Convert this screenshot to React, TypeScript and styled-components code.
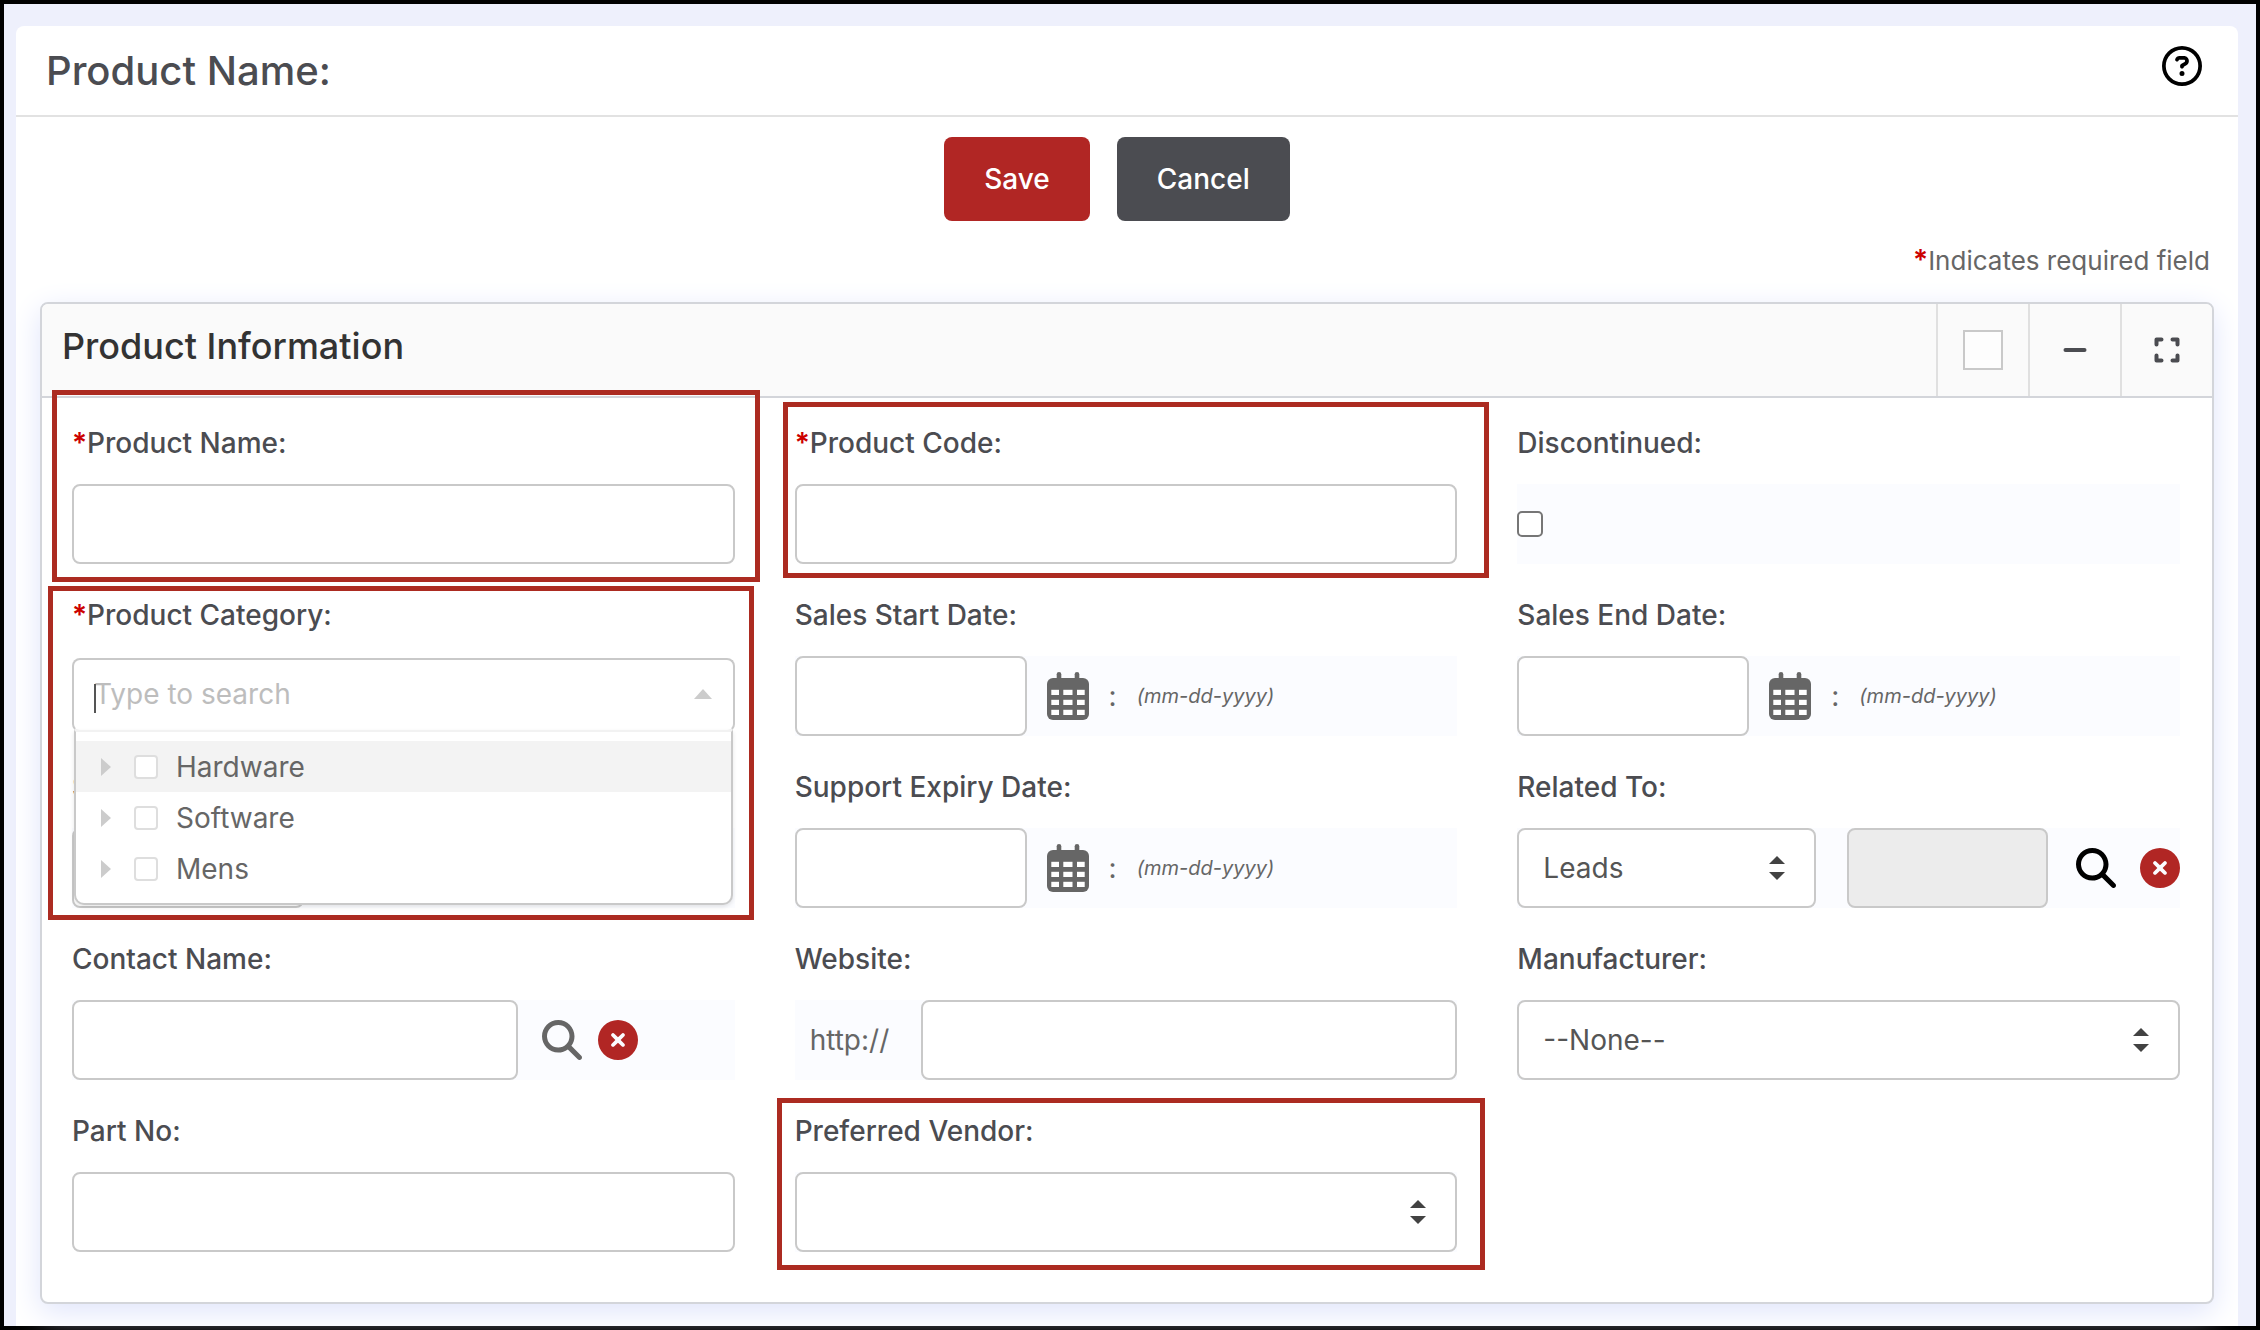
import React, { useId } from "react";
import styled, { createGlobalStyle } from "styled-components";
import {
  FaCircleXmark,
  FaMagnifyingGlass,
  FaRegCircleQuestion,
} from "react-icons/fa6";

const color = {
  page: "#eef0fc",
  label: "#4b4c51",
  text: "#666666",
  line: "#c9c9c9",
  panelLine: "#d3d5da",
  tint: "#fbfcff",
  red: "#b12624",
  star: "#cc0000",
  mark: "#ac2b21",
};

const GlobalStyle = createGlobalStyle`
  *, *::before, *::after { box-sizing: border-box; }
  body {
    margin: 0;
    font-family: Inter, "Liberation Sans", sans-serif;
    font-size: 28px;
    line-height: 40px;
    color: ${color.text};
  }
  button, input, select { font: inherit; color: inherit; margin: 0; }
`;

const Page = styled.main`
  display: flex;
  min-height: 100vh;
  padding: 22px 18px 0 12px;
  border: 4px solid #000;
  background: ${color.page};
`;

const Card = styled.form`
  flex: 1;
  min-width: 0;
  padding-bottom: 22px;
  border-radius: 8px 8px 0 0;
  background: #fff;
`;

const CardHeader = styled.header`
  display: flex;
  align-items: flex-start;
  justify-content: space-between;
  padding: 20px 36px 20px 30px;
  border-bottom: 2px solid #e2e2e2;
`;

const Title = styled.h1`
  margin: 0;
  font-size: 40px;
  line-height: 49px;
  font-weight: 500;
  color: ${color.label};
`;

const IconButton = styled.button<{ $tone?: string }>`
  display: flex;
  flex: none;
  padding: 0;
  border: 0;
  background: none;
  color: ${(p) => p.$tone ?? color.text};
  cursor: pointer;
`;

const Actions = styled.div`
  display: flex;
  justify-content: center;
  gap: 27px;
  padding: 20px 20px 0 0;
`;

const ActionButton = styled.button<{ $tone: string }>`
  height: 84px;
  padding: 0 40px;
  border: 0;
  border-radius: 8px;
  background: ${(p) => p.$tone};
  color: #fff;
  font-weight: 500;
  cursor: pointer;
`;

const RequiredNote = styled.p`
  margin: 19px 28px 21px;
  font-size: 26px;
  text-align: right;
`;

const Star = styled.span`
  font-size: 28px;
  color: ${color.star};
  font-weight: 600;
`;

const Panel = styled.section`
  margin: 0 24px;
  border: 2px solid ${color.panelLine};
  border-radius: 8px;
  background: #fff;
  box-shadow: 0 8px 30px #dfe4fb;
`;

const PanelHeader = styled.header`
  display: flex;
  height: 94px;
  border-bottom: 2px solid ${color.panelLine};
  border-radius: 6px 6px 0 0;
  background: #fafafa;
`;

const PanelTitle = styled.h2`
  flex: 1;
  margin: 0;
  padding: 20px;
  font-size: 36px;
  line-height: 44px;
  font-weight: 500;
  color: #333;
`;

const PanelTool = styled.div`
  display: flex;
  align-items: center;
  justify-content: center;
  width: 92px;
  border-left: 2px solid #e0e0e0;
`;

const PanelCheck = styled.input`
  appearance: none;
  width: 40px;
  height: 40px;
  border: 2px solid ${color.line};
  background: #fdfdfd;
`;

const Fields = styled.div`
  display: grid;
  grid-template-columns: repeat(3, minmax(0, 1fr));
  gap: 31px 60px;
  padding: 25px 32px 50px 30px;
`;

const FieldBox = styled.div<{ $raised?: boolean }>`
  position: relative;
  display: flex;
  flex-direction: column;
  gap: 21px;
  z-index: ${(p) => (p.$raised ? 2 : "auto")};
`;

const Label = styled.label`
  font-weight: 500;
  color: ${color.label};
`;

const ControlRow = styled.div`
  display: flex;
  align-items: center;
  height: 80px;
  background: ${color.tint};
`;

/* Red frame drawn round the fields that need attention. */
const Highlight = styled.div<{ $inset: string }>`
  position: absolute;
  inset: ${(p) => p.$inset};
  border: 5px solid ${color.mark};
  pointer-events: none;
`;

const TextInput = styled.input<{ $width?: string }>`
  flex: ${(p) => (p.$width ? "none" : "1 1 0")};
  width: ${(p) => p.$width ?? "auto"};
  min-width: 0;
  height: 80px;
  padding: 0 24px;
  border: 2px solid ${color.line};
  border-radius: 8px;
  background: #fff;
  &:disabled {
    margin-left: 31px;
    background: #ececec;
  }
`;

const SelectWrap = styled.div<{ $width: string }>`
  position: relative;
  flex: none;
  width: ${(p) => p.$width};
  svg {
    position: absolute;
    top: 28px;
    right: 31px;
    pointer-events: none;
  }
`;

const NativeSelect = styled.select`
  appearance: none;
  display: block;
  width: 100%;
  height: 80px;
  padding: 0 56px 0 24px;
  border: 2px solid ${color.line};
  border-radius: 8px;
  background: #fff;
  color: #555;
`;

const TickBox = styled.input`
  appearance: none;
  width: 26px;
  height: 26px;
  border: 2px solid #767676;
  border-radius: 5px;
  background: #fff;
`;

const CalendarButton = styled(IconButton)`
  margin-left: 20px;
`;

const Colon = styled.span`
  margin: 0 20px;
`;

const Hint = styled.em`
  font-size: 20px;
`;

const LookupIcons = styled.div<{ $lead: number; $gap: number }>`
  display: flex;
  gap: ${(p) => p.$gap}px;
  margin-left: ${(p) => p.$lead}px;
`;

const Prefix = styled.span`
  padding: 0 32px 0 15px;
`;

const TreeRow = styled.div`
  position: relative;
  height: 80px;
  padding-top: 2px;
`;

const TreeControl = styled.div`
  position: relative;
  display: flex;
  align-items: center;
  height: 74px;
  padding: 0 21px 2px 20px;
  border: 2px solid ${color.line};
  border-bottom-color: #f2f2f2;
  border-radius: 8px;
  background: #fff;
`;

const TreeInput = styled.input`
  flex: 1;
  min-width: 0;
  padding: 0;
  border: 0;
  outline: 0;
  background: none;
  &::placeholder { color: #bdbdbd; opacity: 1; }
`;

const Caret = styled.span`
  position: absolute;
  left: 20px;
  top: 24px;
  width: 2px;
  height: 29px;
  background: #555;
`;

const TreeMenu = styled.ul`
  position: absolute;
  top: 74px;
  left: 2px;
  right: 2px;
  margin: 0;
  padding: 9px 0;
  height: 175px;
  list-style: none;
  border: 2px solid ${color.line};
  border-top: 2px solid #f2f2f2;
  border-radius: 0 0 10px 10px;
  background: #fff;
  box-shadow: 0 2px 4px rgba(0, 0, 0, 0.1);
`;

const TreeItem = styled.li<{ $active?: boolean }>`
  display: flex;
  align-items: center;
  height: 51px;
  padding-left: 25px;
  background: ${(p) => (p.$active ? "#f3f3f3" : "transparent")};
  label { padding-left: 18px; }
`;

const TreeCheck = styled.input`
  appearance: none;
  width: 24px;
  height: 24px;
  margin-left: 23px;
  border: 2px solid #dedede;
  border-radius: 4px;
  background: #fff;
`;

function SortArrows() {
  return (
    <svg width="16" height="24" viewBox="0 0 16 24" fill="#424242" aria-hidden="true">
      <path d="M8 0 16 8H0Z" />
      <path d="M0 16H16L8 24Z" />
    </svg>
  );
}

function CalendarIcon() {
  return (
    <svg width="42" height="48" viewBox="0 0 42 48" fill="currentColor" aria-hidden="true">
      <rect x="9.700" width="4.600" height="12" rx="2.300" />
      <rect x="27.700" width="4.600" height="12" rx="2.300" />
      <rect y="6" width="42" height="42" rx="6" />
      {[17.8, 27.8, 37.8].map((y) => (
        <g key={y} fill="#fff">
          <rect x="4.300" y={y} width="7.700" height="5.200" />
          <rect x="16.300" y={y} width="9.200" height="5.200" />
          <rect x="30" y={y} width="7.700" height="5.200" />
        </g>
      ))}
    </svg>
  );
}

type FieldProps = {
  label: string;
  required?: boolean;
  raised?: boolean;
  mark?: string;
  children: (id: string) => React.ReactNode;
};

function Field({ label, required, raised, mark, children }: FieldProps) {
  const id = useId();
  return (
    <FieldBox $raised={raised}>
      <Label htmlFor={id}>
        {required && <Star>*</Star>}
        {label}
      </Label>
      {children(id)}
      {mark && <Highlight $inset={mark} />}
    </FieldBox>
  );
}

function DateField({ label, hint = true }: { label: string; hint?: boolean }) {
  return (
    <Field label={label}>
      {(id) => (
        <ControlRow>
          <TextInput id={id} type="text" $width="35%" />
          {hint && (
            <>
              <CalendarButton type="button" aria-label="Pick a date">
                <CalendarIcon />
              </CalendarButton>
              <Colon>:</Colon>
              <Hint>(mm-dd-yyyy)</Hint>
            </>
          )}
        </ControlRow>
      )}
    </Field>
  );
}

function Select({ id, value, width = "100%" }: { id: string; value: string; width?: string }) {
  return (
    <SelectWrap $width={width}>
      <NativeSelect id={id} defaultValue={value}>
        <option value={value}>{value}</option>
      </NativeSelect>
      <SortArrows />
    </SelectWrap>
  );
}

function Lookup({ tone, lead, gap }: { tone: string; lead: number; gap: number }) {
  return (
    <LookupIcons $lead={lead} $gap={gap}>
      <IconButton type="button" $tone={tone} aria-label="Search">
        <FaMagnifyingGlass size={40} />
      </IconButton>
      <IconButton type="button" $tone={color.red} aria-label="Clear">
        <FaCircleXmark size={40} />
      </IconButton>
    </LookupIcons>
  );
}

function TreeSelect({ id }: { id: string }) {
  return (
    <TreeRow>
      <TreeControl>
        <Caret />
        <TreeInput id={id} type="text" placeholder="Type to search" />
        <svg width="18" height="10" viewBox="0 0 18 10" fill="#cccccc" aria-hidden="true">
          <path d="M9 0 18 10H0Z" />
        </svg>
      </TreeControl>
      <TreeMenu>
        {["Hardware", "Software", "Mens"].map((name, i) => (
          <TreeItem key={name} $active={i === 0}>
            <svg width="10" height="18" viewBox="0 0 10 18" fill="#cccccc" aria-hidden="true">
              <path d="M0 0 10 9 0 18Z" />
            </svg>
            <TreeCheck id={`${id}-${name}`} type="checkbox" />
            <label htmlFor={`${id}-${name}`}>{name}</label>
          </TreeItem>
        ))}
      </TreeMenu>
    </TreeRow>
  );
}

export default function App() {
  return (
    <>
      <GlobalStyle />
      <Page>
        <Card onSubmit={(e) => e.preventDefault()}>
          <CardHeader>
            <Title>Product Name:</Title>
            <IconButton type="button" $tone="#000" aria-label="Help">
              <FaRegCircleQuestion size={40} />
            </IconButton>
          </CardHeader>
          <Actions>
            <ActionButton type="submit" $tone={color.red}>Save</ActionButton>
            <ActionButton type="button" $tone={color.label}>Cancel</ActionButton>
          </Actions>
          <RequiredNote>
            <Star>*</Star>Indicates required field
          </RequiredNote>

          <Panel>
            <PanelHeader>
              <PanelTitle>Product Information</PanelTitle>
              <PanelTool>
                <PanelCheck type="checkbox" aria-label="Select section" />
              </PanelTool>
              <PanelTool>
                <IconButton type="button" $tone={color.label} aria-label="Collapse">
                  <svg width="24" height="24" viewBox="0 0 24 24" stroke="currentColor" strokeWidth="4" strokeLinecap="round">
                    <path d="M2.500 12H21.500" />
                  </svg>
                </IconButton>
              </PanelTool>
              <PanelTool>
                <IconButton type="button" $tone={color.label} aria-label="Expand">
                  <svg width="26" height="26" viewBox="0 0 26 26" fill="none" stroke="currentColor" strokeWidth="4" strokeLinecap="round" strokeLinejoin="round">
                    <path d="M2.500 7.500V2.500H7.500M18.500 2.500H23.500V7.500M23.500 18.500V23.500H18.500M7.500 23.500H2.500V18.500" />
                  </svg>
                </IconButton>
              </PanelTool>
            </PanelHeader>

            <Fields>
              <Field label="Product Name:" required mark="-33px -25px -18px -20px">
                {(id) => <TextInput id={id} type="text" $width="100%" />}
              </Field>
              <Field label="Product Code:" required mark="-21px -32px -14px -12px">
                {(id) => <TextInput id={id} type="text" $width="100%" />}
              </Field>
              <Field label="Discontinued:">
                {(id) => (
                  <ControlRow>
                    <TickBox id={id} type="checkbox" />
                  </ControlRow>
                )}
              </Field>

              <Field label="Product Category:" required raised mark="-9px -19px -184px -24px">
                {(id) => <TreeSelect id={id} />}
              </Field>
              <DateField label="Sales Start Date:" />
              <DateField label="Sales End Date:" />

              <DateField label="Start:" hint={false} />
              <DateField label="Support Expiry Date:" />
              <Field label="Related To:">
                {(id) => (
                  <ControlRow>
                    <Select id={id} value="Leads" width="45%" />
                    <TextInput type="text" disabled aria-label="Related record" />
                    <Lookup tone="#000" lead={28} gap={24} />
                  </ControlRow>
                )}
              </Field>

              <Field label="Contact Name:">
                {(id) => (
                  <ControlRow>
                    <TextInput id={id} type="text" $width="calc(100% - 217px)" />
                    <Lookup tone={color.text} lead={24} gap={16} />
                  </ControlRow>
                )}
              </Field>
              <Field label="Website:">
                {(id) => (
                  <ControlRow>
                    <Prefix>http://</Prefix>
                    <TextInput id={id} type="text" />
                  </ControlRow>
                )}
              </Field>
              <Field label="Manufacturer:">
                {(id) => (
                  <ControlRow>
                    <Select id={id} value="--None--" />
                  </ControlRow>
                )}
              </Field>

              <Field label="Part No:">
                {(id) => <TextInput id={id} type="text" $width="100%" />}
              </Field>
              <Field label="Preferred Vendor:" mark="-13px -28px -18px -18px">
                {(id) => (
                  <ControlRow>
                    <Select id={id} value="" />
                  </ControlRow>
                )}
              </Field>
            </Fields>
          </Panel>
        </Card>
      </Page>
    </>
  );
}
